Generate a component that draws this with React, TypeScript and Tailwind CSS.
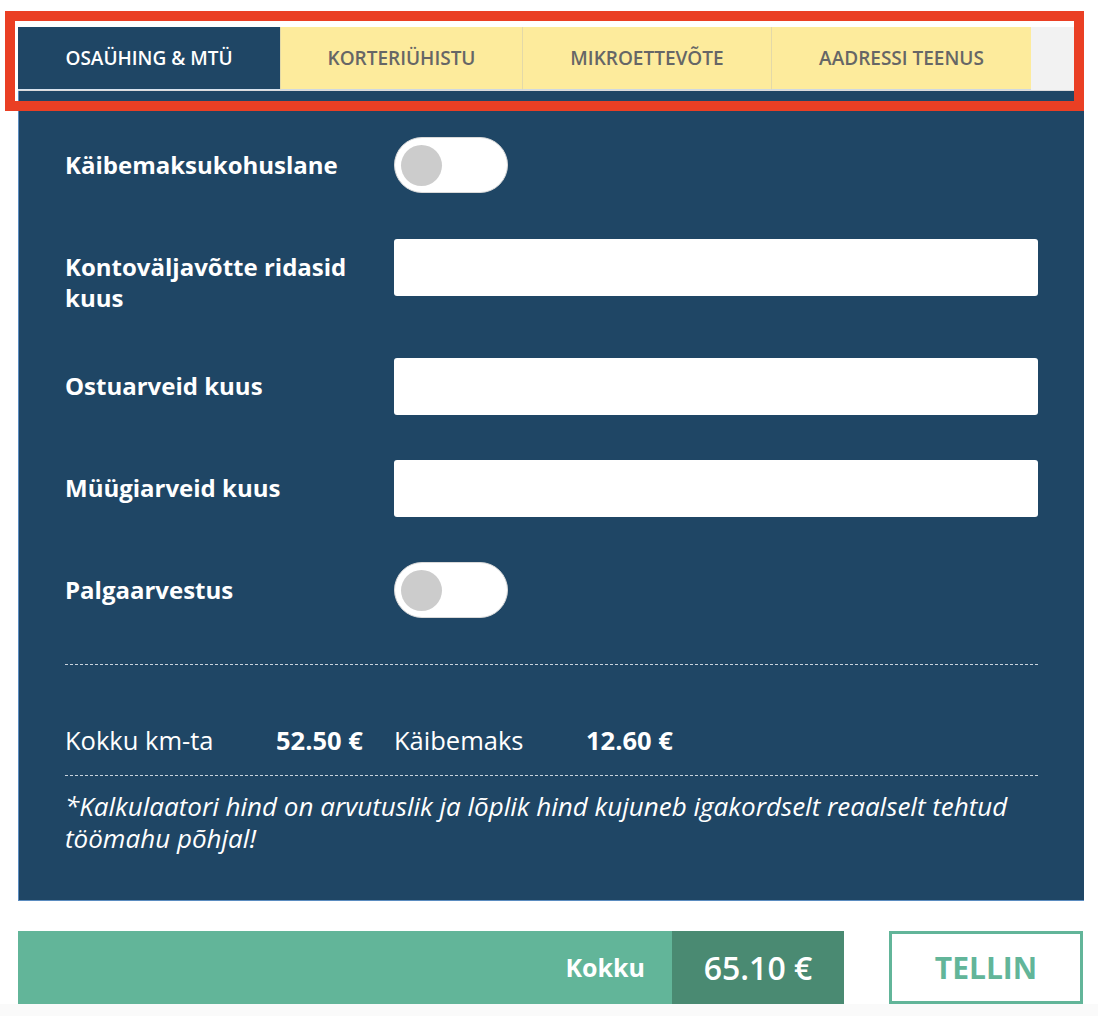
import { useState } from "react";

const tabs = ["OSAÜHING & MTÜ", "KORTERIÜHISTU", "MIKROETTEVÕTE", "AADRESSI TEENUS"];
const tabWidths = ["w-[262px]", "w-[242px]", "w-[249px]", "w-[260px]"];

function Toggle({ on, onClick }: { on: boolean; onClick: () => void }) {
  return (
    <button
      onClick={onClick}
      className="relative w-[114px] h-[56px] rounded-full bg-white border border-[#d9d9d9] shrink-0"
    >
      <span
        className={
          "absolute top-[7px] w-[41px] h-[41px] rounded-full bg-[#cccccc] " +
          (on ? "left-[65px]" : "left-[6px]")
        }
      />
    </button>
  );
}

export default function App() {
  const [active, setActive] = useState(0);
  const [vat, setVat] = useState(false);
  const [salary, setSalary] = useState(false);

  return (
    <div
      className="relative w-[1098px] h-[1016px] bg-white"
      style={{ fontFamily: "'Open Sans', 'Noto Sans', sans-serif" }}
    >
      <div className="pl-[18px] pt-[27px] w-[1084px]">
        {/* tabs */}
        <div className="flex h-[64px] bg-[#f2f2f2] border-b border-[#dcdcdc]">
          {tabs.map((t, i) => (
            <button
              key={t}
              onClick={() => setActive(i)}
              className={
                tabWidths[i] +
                " h-full flex items-center justify-center text-[19px] font-semibold " +
                (i === active
                  ? "bg-[#1f4665] text-white border-b border-[#d6e2ee]"
                  : "bg-[#fdeb9c] text-[#666666] border-l border-[#e3d9a8] border-b border-b-[#cfd8e0]")
              }
            >
              {t}
            </button>
          ))}
        </div>

        {/* form panel */}
        <div className="bg-[#1f4665] border-l border-b border-[#5b8cc0] px-[46px] pt-[46px] pb-[46px] text-white">
          <div className="flex items-start">
            <label className="w-[329px] pt-[12px] text-[24px] font-bold leading-[31px]">Käibemaksukohuslane</label>
            <Toggle on={vat} onClick={() => setVat(!vat)} />
          </div>

          <div className="flex items-start mt-[46px]">
            <label className="w-[329px] pt-[12px] text-[24px] font-bold leading-[31px]">
              Kontoväljavõtte ridasid
              <br />
              kuus
            </label>
            <input className="flex-1 h-[57px] bg-white rounded-[3px] text-black px-3 outline-none" />
          </div>

          <div className="flex items-start mt-[45px]">
            <label className="w-[329px] pt-[12px] text-[24px] font-bold leading-[31px]">Ostuarveid kuus</label>
            <input className="flex-1 h-[57px] bg-white rounded-[3px] text-black px-3 outline-none" />
          </div>

          <div className="flex items-start mt-[45px]">
            <label className="w-[329px] pt-[12px] text-[24px] font-bold leading-[31px]">Müügiarveid kuus</label>
            <input className="flex-1 h-[57px] bg-white rounded-[3px] text-black px-3 outline-none" />
          </div>

          <div className="flex items-start mt-[45px]">
            <label className="w-[329px] pt-[12px] text-[24px] font-bold leading-[31px]">Palgaarvestus</label>
            <Toggle on={salary} onClick={() => setSalary(!salary)} />
          </div>

          <div className="mt-[46px] border-t border-dashed border-[#c9d3dd]" />

          <div className="flex items-center mt-[60px] h-[30px] leading-[30px] text-[25.5px]">
            <span className="w-[211px]">Kokku km-ta</span>
            <span className="w-[118px] font-bold">52.50 €</span>
            <span className="w-[192px]">Käibemaks</span>
            <span className="font-bold">12.60 €</span>
          </div>

          <div className="mt-[20px] border-t border-dashed border-[#c9d3dd]" />

          <p className="mt-[14px] text-[26px] italic leading-[32px]">
            *Kalkulaatori hind on arvutuslik ja lõplik hind kujuneb igakordselt reaalselt tehtud
            <br />
            töömahu põhjal!
          </p>
        </div>

        {/* total bar */}
        <div className="flex mt-[30px] h-[73px]">
          <div className="w-[654px] bg-[#62b599] flex items-center justify-end pr-[27px]">
            <span className="text-white font-bold text-[25px]">Kokku</span>
          </div>
          <div className="w-[172px] bg-[#4a8a72] flex items-center justify-center">
            <span className="text-white font-semibold text-[32px]">65.10 €</span>
          </div>
          <button className="ml-[45px] w-[194px] border-[3px] border-[#62b599] bg-white text-[#62b599] font-bold text-[30px]">
            TELLIN
          </button>
        </div>
      </div>
      <div className="absolute left-0 right-0 bottom-0 h-[12px] bg-[#fafafa]" />

      {/* highlight frame */}
      <div className="absolute left-[5px] top-[11px] w-[1079px] h-[100px] border-[10px] border-[#ea3f24] pointer-events-none" />
    </div>
  );
}
